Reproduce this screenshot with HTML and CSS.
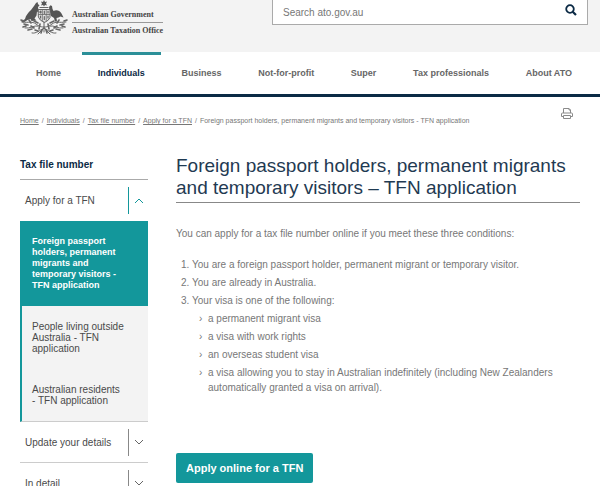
FILE: index.html
```html
<!DOCTYPE html>
<html lang="en">
<head>
  <meta charset="UTF-8" />
  <meta name="viewport" content="width=device-width, initial-scale=1.0"/>
  <title>TFN application | Australian Taxation Office</title>
  <link rel="stylesheet" href="styles.css">
</head>
<body>

<header class="site-header">
  <a class="brand" href="#">
    <svg class="crest" viewBox="0 0 48 36" fill="none" stroke="#666" stroke-linecap="round" aria-hidden="true">
      <!-- star -->
      <path d="M24 0l1 2 2-.5-1 2 1 2-2-.5-1 1.500-1-1.500-2 .5 1-2-1-2 2 .5z" fill="#555" stroke="none"/>
      <path d="M20 7.500h8" stroke-width="1.200"/>
      <!-- kangaroo -->
      <path d="M16 3l1.500-1 .5 2 1.500 1.500-1.500 1.500.5 3 2 2-2 .5-1.500-1-.5 4-2 3 2 2-5 .5-1-2-3 1-4 2.500-2.500-.5 4-3c1-4 3-6 6-9l3-4z" fill="#555" stroke="none"/>
      <!-- emu -->
      <path d="M29 7l1.500-1.800 1.500.8.500 3 1 2c3-1.500 6-.5 8 2.500l2 4-3-1-2 1-2 .5.500 3.500h-2l-1-3.500-3-2-1-4-.8-3.500z" fill="#555" stroke="none"/>
      <!-- shield -->
      <path d="M18.500 9.500h11.500v8q-1 3-5.500 5-5-2-6-5z" stroke-width="1" fill="#e2e2e2"/>
      <path d="M22.300 9.500v11M26.200 9.500v11M18.500 14.500h11.500" stroke-width=".8"/>
      <path d="M20.500 11v2M19.500 12h2M24.300 11v2.500M28 11v2M20.500 16v2M24.300 16.500v3M28 16v2" stroke-width="1.200"/>
      <!-- wattle -->
      <path d="M2 22c7 1 10-1 14 2s6 3 8 3M46 22c-7 1-10-1-14 2s-6 3-8 3M24 22v10M5 28c5 1 9-3 13-2M43 28c-5 1-9-3-13-2M12 33c4 1 8-3 12-5M36 33c-4 1-8-3-12-5M18 34l6-6 6 6" stroke-width="1"/>
      <path d="M1 20l3 1M4 24l4 1M9 20l2 3M3 27l3-1M8 30l4-1M11 26l3 2M15 30l3 1M47 20l-3 1M44 24l-4 1M39 20l-2 3M45 27l-3-1M40 30l-4-1M37 26l-3 2M33 30l-3 1M20 24l-1 5M28 24l1 5M14 21l4 2M34 21l-4 2M21 33l1-3M27 33l-1-3" stroke-width="1.600"/>
    </svg>
    <span class="brand-text">
      <span class="brand-gov">Australian Government</span>
      <span class="brand-office">Australian Taxation Office</span>
    </span>
  </a>
  <form class="search" role="search">
    <input type="search" placeholder="Search ato.gov.au" aria-label="Search ato.gov.au" />
    <button type="submit" aria-label="Search">
      <svg viewBox="0 0 12 12" fill="none" stroke="#0b2a45" aria-hidden="true">
        <circle cx="5" cy="5" r="3.800" stroke-width="1.800"/>
        <path d="M7.700 7.700L11 11" stroke-width="2.200"/>
      </svg>
    </button>
  </form>
</header>

<nav class="main-nav" aria-label="Main">
  <a href="#">Home</a>
  <a href="#" class="active">Individuals</a>
  <a href="#">Business</a>
  <a href="#">Not-for-profit</a>
  <a href="#">Super</a>
  <a href="#">Tax professionals</a>
  <a href="#">About ATO</a>
</nav>

<div class="crumb-bar">
  <ol class="breadcrumb">
    <li><a href="#">Home</a></li>
    <li><a href="#">Individuals</a></li>
    <li><a href="#">Tax file number</a></li>
    <li><a href="#">Apply for a TFN</a></li>
    <li>Foreign passport holders, permanent migrants and temporary visitors - TFN application</li>
  </ol>
  <button class="print" type="button" aria-label="Print">
    <svg viewBox="0 0 12 11" fill="none" stroke="#8a8a8a" aria-hidden="true">
      <path d="M2.500 5V.5h5.500L9.500 2v3M8 .5V2h1.500"/>
      <path d="M2.500 8.500h-2V6q0-1 1-1h9q1 0 1 1v2.500h-2"/>
      <path d="M2.500 7.500h7v3h-7z"/>
    </svg>
  </button>
</div>

<div class="page">
  <aside class="sidebar">
    <h2>Tax file number</h2>
    <div class="side-row open">
      <a href="#">Apply for a TFN</a>
      <button type="button" aria-label="Collapse Apply for a TFN" aria-expanded="true">
        <svg viewBox="0 0 10 6" aria-hidden="true"><path d="M1 5l4-4 4 4"/></svg>
      </button>
    </div>
    <ul class="sub-menu">
      <li class="current"><a href="#">Foreign passport holders, permanent migrants and temporary visitors - TFN application</a></li>
      <li><a href="#">People living outside Australia - TFN application</a></li>
      <li><a href="#">Australian residents - TFN application</a></li>
    </ul>
    <div class="side-row">
      <a href="#">Update your details</a>
      <button type="button" aria-label="Expand Update your details" aria-expanded="false">
        <svg viewBox="0 0 10 6" aria-hidden="true"><path d="M1 1l4 4 4-4"/></svg>
      </button>
    </div>
    <div class="side-row">
      <a href="#">In detail</a>
      <button type="button" aria-label="Expand In detail" aria-expanded="false">
        <svg viewBox="0 0 10 6" aria-hidden="true"><path d="M1 1l4 4 4-4"/></svg>
      </button>
    </div>
  </aside>

  <main class="content">
    <h1>Foreign passport holders, permanent migrants and temporary visitors – TFN application</h1>
    <p>You can apply for a tax file number online if you meet these three conditions:</p>
    <ol class="conditions">
      <li>You are a foreign passport holder, permanent migrant or temporary visitor.</li>
      <li>You are already in Australia.</li>
      <li>Your visa is one of the following:
        <ul>
          <li>a permanent migrant visa</li>
          <li>a visa with work rights</li>
          <li>an overseas student visa</li>
          <li>a visa allowing you to stay in Australian indefinitely (including New Zealanders automatically granted a visa on arrival).</li>
        </ul>
      </li>
    </ol>
    <button class="btn" type="button">Apply online for a TFN</button>
  </main>
</div>

</body>
</html>
```
FILE: styles.css
```css
:root {
  --navy: #0b2a45;
  --teal: #13979b;
  --text: #777;
  --dark-text: #4a4a4a;
  --light: #f3f3f3;
}

* {
  box-sizing: border-box;
}

body {
  margin: 0;
  background: #fff;
  color: var(--text);
  font-family: "Liberation Sans", Arial, sans-serif;
  font-size: 10px;
  line-height: 15px;
  overflow: hidden;
}

button {
  padding: 0;
  border: none;
  background: none;
  font-family: inherit;
  cursor: pointer;
}

svg {
  display: block;
}

/* Header */
.site-header {
  display: flex;
  justify-content: space-between;
  align-items: flex-start;
  height: 52px;
  padding: 0 12px 0 20px;
  background: var(--light);
}

.brand {
  display: flex;
  color: #444;
  text-decoration: none;
  font-family: "Liberation Serif", "Times New Roman", serif;
  font-size: 8px;
  font-weight: bold;
  white-space: nowrap;
}

.crest {
  width: 48px;
  height: 36px;
  margin-right: 4px;
}

.brand-text {
  padding-top: 7px;
}

.brand-gov,
.brand-office {
  display: block;
}

.brand-gov {
  border-bottom: 1px solid #999;
}

.search {
  display: flex;
  width: 316px;
  height: 25px;
  border: 1px solid #aaa;
  border-top: none;
  background: #fff;
}

.search input {
  flex: 1;
  min-width: 0;
  padding: 0 10px;
  border: none;
  outline: none;
  background: none;
  font-family: inherit;
  font-size: 10px;
}

.search input::placeholder {
  color: var(--text);
}

.search button {
  width: 32px;
  padding: 0 10px 4px;
}

.search svg {
  width: 12px;
  height: 12px;
}

/* Navigation */
.main-nav {
  display: flex;
  justify-content: space-between;
  height: 45px;
  padding: 0 12px 0 20px;
  border-bottom: 3px solid var(--navy);
}

.main-nav a {
  padding: 0 16px;
  border-top: 3px solid transparent;
  color: #666;
  font-weight: bold;
  font-size: 9px;
  line-height: 36px;
  text-decoration: none;
  white-space: nowrap;
}

.main-nav a.active {
  border-top-color: #2b8f98;
  color: var(--navy);
}

/* Breadcrumb */
.crumb-bar {
  display: flex;
  justify-content: space-between;
  padding: 11px 27px 0 20px;
}

.breadcrumb {
  display: flex;
  flex-wrap: wrap;
  margin: 0;
  padding: 5px 0 0;
  list-style: none;
  font-size: 7px;
  line-height: 15px;
}

.breadcrumb li + li::before {
  content: "/";
  margin: 0 3px;
}

.breadcrumb a {
  color: inherit;
}

.print {
  width: 12px;
  height: 11px;
}

/* Page */
.page {
  display: flex;
  gap: 28px;
  padding: 27px 20px 0;
}

.sidebar {
  flex: 0 0 128px;
}

.sidebar h2 {
  margin: 0;
  padding-bottom: 4px;
  border-bottom: 1px solid #aaa;
  color: var(--navy);
  font-size: 10px;
  line-height: 20px;
}

.side-row {
  display: flex;
  justify-content: space-between;
  align-items: center;
  height: 41px;
  padding-left: 5px;
  border-bottom: 1px solid #ccc;
}

.side-row.open {
  border-bottom: none;
}

.side-row a,
.sub-menu a {
  color: var(--dark-text);
  text-decoration: none;
}

.side-row button {
  width: 20px;
  height: 27px;
  padding-left: 5px;
  border-left: 1px solid #888;
}

.side-row svg {
  width: 10px;
  height: 6px;
  fill: none;
  stroke: #666;
}

.side-row.open button {
  border-left-color: var(--teal);
}

.side-row.open svg {
  stroke: var(--teal);
}

.sub-menu {
  margin: 0;
  padding: 0;
  border-left: 2px solid var(--teal);
  border-bottom: 1px solid #ccc;
  background: var(--light);
  list-style: none;
  line-height: 11px;
}

.sub-menu a {
  display: block;
  padding: 15px 24px 15px 10px;
}

.sub-menu .current a {
  background: var(--teal);
  color: #fff;
  font-weight: bold;
  font-size: 9px;
}

/* Content */
.content {
  flex: 1;
  min-width: 0;
}

.content h1 {
  margin: 0;
  padding: 0 0 3px;
  border-bottom: 1px solid #888;
  color: #1f3a52;
  font-size: 19px;
  font-weight: normal;
  line-height: 22px;
}

.content p {
  margin: 23px 0 16px;
}

.conditions {
  margin: 0;
  padding-left: 16px;
}

.content li {
  margin-bottom: 3px;
}

.conditions ul {
  margin: 3px 0 0;
  padding-left: 16px;
  list-style: "›  ";
}

.btn {
  margin-top: 55px;
  padding: 0 10px;
  border-radius: 2px;
  background: var(--teal);
  color: #fff;
  font-size: 11px;
  font-weight: bold;
  line-height: 30px;
}
```
